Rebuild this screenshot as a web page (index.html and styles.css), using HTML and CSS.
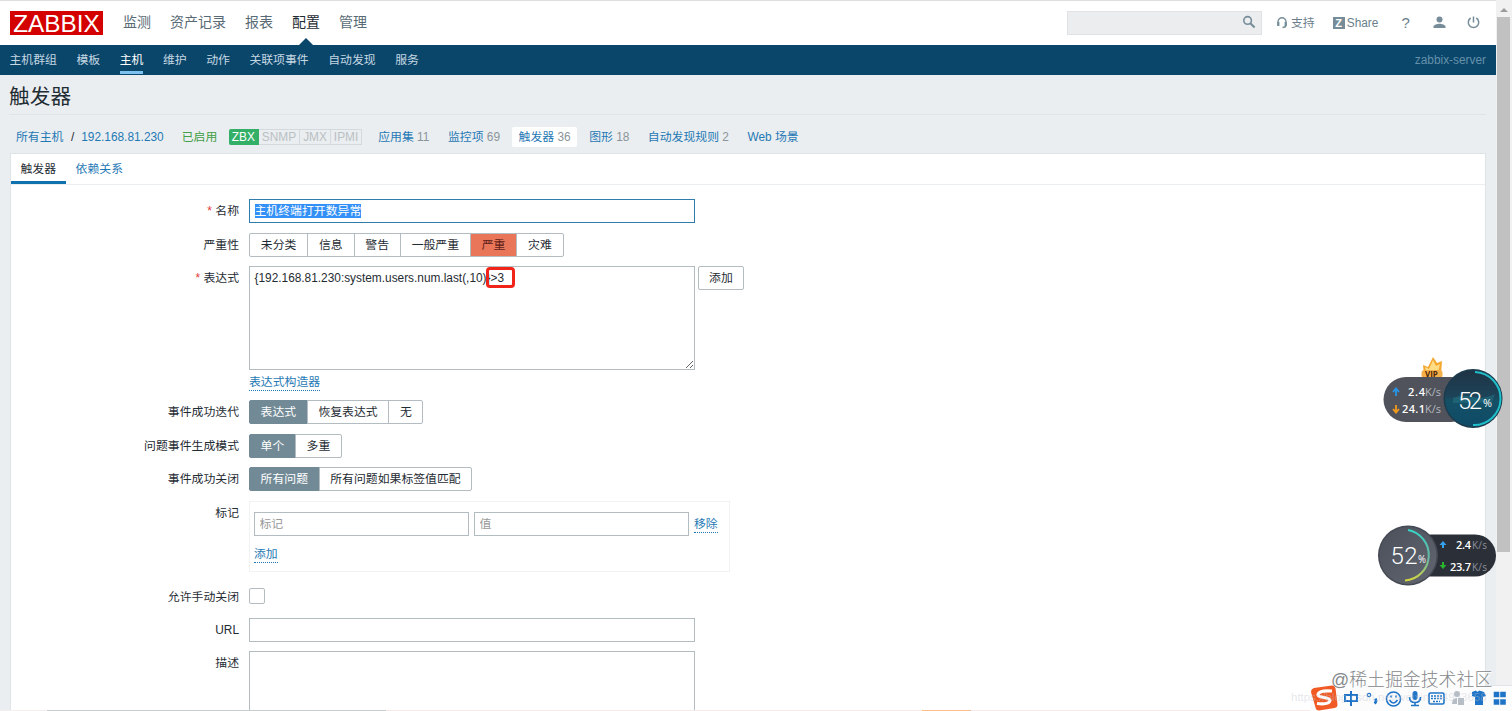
FILE: index.html
```html
<!DOCTYPE html>
<html lang="zh-CN">

<head>
    <meta charset="UTF-8">
    <title>触发器</title>
    <link rel="stylesheet" href="styles.css">
</head>

<body>
    <div class="page">
        <!-- 顶部菜单 -->
        <header class="top">
            <a class="logo">ZABBIX</a>
            <ul class="top-nav">
                <li>监测</li>
                <li>资产记录</li>
                <li>报表</li>
                <li class="selected">配置</li>
                <li>管理</li>
            </ul>
            <div class="search">
                <svg width="14" height="14" viewBox="0 0 14 14" fill="none" stroke="#768d99">
                    <circle cx="5.6" cy="5.4" r="3.8" stroke-width="1.6" />
                    <path d="M8.4 8.2l4.2 4.3" stroke-width="2" />
                </svg>
            </div>
            <div class="tools">
                <a class="support">
                    <svg width="12" height="13" viewBox="0 0 12 13" fill="none" stroke="#768d99">
                        <path d="M2 9.5V6a4 4.300 0 0 1 8 0v3.500Q9.500 11.500 6.500 11.500" stroke-width="1.400" />
                        <path d="M2.300 6v4M9.700 6v4" stroke-width="2.200" />
                    </svg>
                    支持
                </a>
                <a class="share"><span class="z">Z</span>Share</a>
                <a class="help">?</a>
                <svg class="user" width="13" height="13" viewBox="0 0 13 13" fill="#768d99">
                    <circle cx="6.5" cy="3.5" r="3" />
                    <path d="M.5 12v-1.400C.5 8.700 4.300 7.700 6.500 7.700s6 1 6 2.900V12z" />
                </svg>
                <svg class="power" width="13" height="13" viewBox="0 0 13 13" fill="none" stroke="#768d99" stroke-width="1.5">
                    <path d="M6.500 .5v6M3.700 2A5.200 5.200 0 1 0 9.300 2" />
                </svg>
            </div>
        </header>
        <!-- 二级菜单 -->
        <nav class="sub-nav">
            <a>主机群组</a>
            <a>模板</a>
            <a class="selected">主机</a>
            <a>维护</a>
            <a>动作</a>
            <a>关联项事件</a>
            <a>自动发现</a>
            <a>服务</a>
            <span class="server">zabbix-server</span>
        </nav>
        <h1>触发器</h1>
        <!-- 主机信息 -->
        <div class="crumbs">
            <a>所有主机</a>
            <span class="slash">/</span>
            <a>192.168.81.230</a>
            <span class="green">已启用</span>
            <div class="status">
                <span class="on">ZBX</span><span>SNMP</span><span>JMX</span><span>IPMI</span>
            </div>
            <div class="links">
                <span><a>应用集</a> 11</span>
                <span><a>监控项</a> 69</span>
                <span class="selected"><a>触发器</a> 36</span>
                <span><a>图形</a> 18</span>
                <span><a>自动发现规则</a> 2</span>
                <span><a>Web 场景</a></span>
            </div>
        </div>
        <!-- 表单 -->
        <main class="card">
            <div class="tabs">
                <a class="selected">触发器</a>
                <a>依赖关系</a>
            </div>
            <form class="form">
                <label class="required">名称</label>
                <div class="input focus"><span class="selection">主机终端打开数异常</span></div>

                <label>严重性</label>
                <div class="radio severity">
                    <span>未分类</span><span>信息</span><span>警告</span><span>一般严重</span><span class="high">严重</span><span>灾难</span>
                </div>

                <label class="required">表达式</label>
                <div class="expression">
                    <div class="expression-row">
                        <textarea class="textarea" spellcheck="false">{192.168.81.230:system.users.num.last(,10)}>3</textarea>
                        <span class="btn">添加</span>
                        <div class="mark"></div>
                    </div>
                    <a class="dotted">表达式构造器</a>
                </div>

                <label>事件成功迭代</label>
                <div class="radio">
                    <span class="checked">表达式</span><span>恢复表达式</span><span>无</span>
                </div>

                <label>问题事件生成模式</label>
                <div class="radio">
                    <span class="checked">单个</span><span>多重</span>
                </div>

                <label>事件成功关闭</label>
                <div class="radio">
                    <span class="checked">所有问题</span><span>所有问题如果标签值匹配</span>
                </div>

                <label>标记</label>
                <div class="tags">
                    <div class="tag-row">
                        <input class="input" type="text" placeholder="标记">
                        <input class="input" type="text" placeholder="值">
                        <a class="dotted">移除</a>
                    </div>
                    <a class="dotted">添加</a>
                </div>

                <label class="check-label">允许手动关闭</label>
                <div class="check-row"><span class="checkbox"></span></div>

                <label>URL</label>
                <div class="input"></div>

                <label>描述</label>
                <div class="textarea"></div>
            </form>
        </main>
    </div>

    <!-- 滚动条 -->
    <div class="scrollbar">
        <div class="arrow"></div>
        <div class="thumb"></div>
    </div>

    <!-- 网速悬浮球 -->
    <svg class="ball ball-top" width="124" height="78" viewBox="0 0 124 78">
        <defs>
            <linearGradient id="sea" x1="0" y1="0" x2="0" y2="1">
                <stop offset="0" stop-color="#1f3345" />
                <stop offset=".45" stop-color="#1d4358" />
                <stop offset=".55" stop-color="#145166" />
                <stop offset="1" stop-color="#0e4a66" />
            </linearGradient>
        </defs>
        <path d="M44 19l-1-9 5 2 5-10 4 6 5-2-1 13z" fill="#f3a72e" />
        <path d="M46 17l-1-5 4 2 4-9 3 6 4-2-2 8z" fill="#ffdc86" />
        <rect x="41.5" y="15" width="21" height="8" rx="3" fill="#f6b04a" />
        <text x="45" y="22" class="vip">VIP</text>
        <rect x="3.5" y="22" width="90" height="45" rx="22.5" fill="#50535c" />
        <path d="M16 41v-7M13 37l3-3.500 3 3.500" stroke="#2796e6" stroke-width="1.8" fill="none" />
        <path d="M16 50v7M13 54l3 3.500 3-3.500" stroke="#f39a1c" stroke-width="1.8" fill="none" />
        <text x="28" y="41" class="speed" textLength="17">2.4</text>
        <text x="45" y="41" class="unit" textLength="16">K/s</text>
        <text x="22" y="57.5" class="speed" textLength="23">24.1</text>
        <text x="45" y="57.5" class="unit" textLength="16">K/s</text>
        <circle cx="93" cy="43.5" r="29.5" fill="#1c3b4d" />
        <circle cx="93" cy="43.5" r="28" fill="url(#sea)" />
        <path d="M73 43q10-4 20-1t22-3l-3 8-39 1z" fill="#247080" opacity=".6" />
        <path d="M95 17a26.500 26.500 0 0 1-2 53" fill="none" stroke="#20bec8" stroke-width="2" />
        <text x="78" y="54" class="percent" textLength="24">52</text>
        <text x="103" y="52" class="sign" font-size="11" textLength="9" lengthAdjust="spacingAndGlyphs">%</text>
    </svg>
    <svg class="ball ball-bottom" width="124" height="66" viewBox="0 0 124 66">
        <defs>
            <linearGradient id="ring" x1="0" y1="0" x2="0" y2="1">
                <stop offset="0" stop-color="#35d3c6" />
                <stop offset=".6" stop-color="#6eb7a0" />
                <stop offset="1" stop-color="#d5d83d" />
            </linearGradient>
            <linearGradient id="dark" x1="0" y1="0" x2="1" y2="1">
                <stop offset="0" stop-color="#4b505b" />
                <stop offset="1" stop-color="#606570" />
            </linearGradient>
        </defs>
        <rect x="34" y="12.5" width="86" height="42" rx="21" fill="#2b2f38" />
        <circle cx="32" cy="33.5" r="30" fill="#454953" />
        <circle cx="32" cy="33.5" r="28.5" fill="url(#dark)" />
        <path d="M32 8a25.500 25.500 0 0 1-3 50.500" fill="none" stroke="url(#ring)" stroke-width="2" />
        <path d="M67 19l3.500 4H68v3h-2v-3h-2.500z" fill="#36a3ef" />
        <path d="M67 47l3.500-4H68v-3h-2v3h-2.500z" fill="#29b52e" />
        <text x="80" y="27" class="speed" textLength="15">2.4</text>
        <text x="96" y="27" class="unit dim" textLength="15">K/s</text>
        <text x="74" y="48.5" class="speed" textLength="21">23.7</text>
        <text x="96" y="48.5" class="unit dim" textLength="15">K/s</text>
        <text x="14.5" y="42" class="percent" textLength="27">52</text>
        <text x="42" y="41" class="sign" font-size="10" textLength="8" lengthAdjust="spacingAndGlyphs">%</text>
    </svg>

    <!-- 任务栏和输入法 -->
    <div class="taskbar"><i class="gray"></i><i class="pink"></i><i class="orange"></i><i class="pink rest"></i></div>
    <div class="ime">
        <svg width="202" height="27" viewBox="0 0 202 27" fill="none" stroke="#1f74c8" stroke-width="1.6">
            <path d="M4 3L22 .5q3 0 3.500 3l2 16q0 3-3 3.500L9 25.500q-3 0-3.500-3L1 7q0-3 3-4z" fill="#f15a24" stroke="none" />
            <path d="M22 6Q9 5 8 9.500c-.5 4 12 2 12 6Q19 20 7 18.500" stroke="#fff" stroke-width="3.2" />
            <path d="M35 10h12v6H35zM41 6v15" stroke-width="2" />
            <circle cx="59" cy="10" r="1.7" stroke-width="1.2" />
            <path d="M65.500 13.500q1.500 3-1 5" stroke-width="2.6" />
            <circle cx="83.5" cy="14" r="7" />
            <path d="M79.500 15q4 6 8 0M81 10.500v2M86 10.500v2" />
            <rect x="102.500" y="6" width="5" height="9" rx="2.5" fill="#1f74c8" stroke="none" />
            <path d="M99.500 12q0 5.500 5.500 5.500t5.500-5.500M105 17.500V21M101 20.500h8" />
            <rect x="119" y="8" width="15" height="11" rx="1.5" />
            <path d="M121 11h11M121 13.500h11M123 16.500h7" stroke-dasharray="2 1" />
            <g fill="#b6bdc5" stroke="none">
                <circle cx="147" cy="9" r="3" />
                <path d="M142 19q0-6 5-6v6zM148 13h6v7h-6z" />
            </g>
            <path d="M162 7l4-1.500q1.500 2.500 3 0L174 7l2 4-3 1v8h-8v-8l-3-1z" fill="#1f74c8" stroke="none" />
            <path d="M184.500 7.500h4v4h-4zM191 7.500h4v4h-4zM184.500 15h4v4h-4zM191 15h4v4h-4z" fill="#1f74c8" />
        </svg>
    </div>
    <div class="blog">https://blog.csdn.net/weixin_44953658</div>
    <div class="community">@稀土掘金技术社区</div>
</body>

</html>
```
FILE: styles.css
```css
* {
    box-sizing: border-box;
}

body {
    margin: 0;
    height: 711px;
    display: flex;
    overflow: hidden;
    background-color: #ebeef0;
    color: #1f2c33;
    font-family: "Liberation Sans", "Noto Sans CJK SC", sans-serif;
    font-size: 11.86px;
    line-height: 16px;
}

.page {
    width: 1496px;
    height: 711px;
    overflow: hidden;
    border-top: 1px solid #dedede;
}

a {
    color: #1f79b5;
}

/* 顶部 */
.top {
    display: flex;
    align-items: center;
    height: 44px;
    padding: 0 10px;
    background-color: #fff;
}

.logo {
    width: 93px;
    height: 24px;
    background-color: #d40000;
    color: #fff;
    font-size: 24.3px;
    line-height: 26px;
    text-align: center;
}

.top-nav {
    display: flex;
    gap: 19px;
    margin: 0 0 0 20px;
    padding: 0;
    list-style: none;
    font-size: 14px;
    line-height: 43px;
    color: #586a75;
}

.top-nav li {
    height: 44px;
}

.top-nav .selected {
    position: relative;
    color: #1f2c33;
}

.top-nav .selected::after {
    content: "";
    position: absolute;
    left: 7px;
    bottom: 0;
    border: 7px solid transparent;
    border-top: 0;
    border-bottom-color: #0a466a;
}

.search {
    display: flex;
    align-items: center;
    justify-content: flex-end;
    width: 195px;
    height: 24px;
    margin-left: auto;
    padding-right: 5px;
    background-color: #ebedee;
    border: 1px solid #e0e3e5;
}

.search svg {
    margin-bottom: 2px;
}

.tools {
    display: flex;
    align-items: center;
    width: 224px;
    padding: 0 0 1px 14px;
    color: #768d99;
}

.tools a {
    display: flex;
    align-items: center;
    color: #6a7f8b;
}

.support svg {
    margin-right: 3px;
}

.share {
    margin-left: 18px;
}

.share .z {
    width: 12px;
    height: 12px;
    margin-right: 2px;
    background-color: #768d99;
    color: #fff;
    font-size: 11px;
    font-weight: bold;
    line-height: 12px;
    text-align: center;
}

.tools .help {
    margin-left: 23px;
    font-size: 15px;
}

.user {
    margin-left: 23px;
}

.power {
    margin-left: 21px;
}

/* 二级菜单 */
.sub-nav {
    display: flex;
    gap: 19.5px;
    height: 30px;
    padding: 0 10px 0 9.5px;
    background-color: #0a466a;
    line-height: 30px;
}

.sub-nav a {
    height: 29px;
    color: #c5d8e3;
}

.sub-nav .selected {
    color: #fff;
    border-bottom: 3px solid #7dc1f1;
}

.server {
    margin-left: auto;
    color: #6591aa;
}

h1 {
    height: 40px;
    margin: 0 10px 0 9px;
    border-bottom: 1px solid #dfe4e7;
    font-size: 20.7px;
    font-weight: normal;
    line-height: 44px;
}

/* 主机信息 */
.crumbs {
    display: flex;
    align-items: center;
    height: 38px;
    padding: 5px 16px 0;
}

.slash {
    margin: 0 7px 0 7.5px;
}

.green {
    margin-left: 18px;
    color: #429e47;
}

.status {
    display: flex;
    margin: 0 9.5px 0 11.5px;
    line-height: 15px;
}

.status span {
    padding: 0 3px;
    border: 1px solid #d3d9dc;
    border-left: 0;
    color: #b9c0c4;
    line-height: 14px;
}

.status .on {
    background-color: #34af67;
    border-color: #34af67;
    border-radius: 2px 0 0 2px;
    color: #fff;
}

.links {
    display: flex;
    gap: 5.5px;
    color: #8a959b;
}

.links span {
    padding: 2px 6.5px;
    border-radius: 2px;
}

.links .selected {
    background-color: #fff;
}

/* 表单 */
.card {
    height: 620px;
    margin: 0 10px;
    background-color: #fff;
    border: 1px solid #dfe4e7;
}

.tabs {
    display: flex;
    height: 31px;
    border-bottom: 1px solid #ebeef0;
    line-height: 31px;
}

.tabs a {
    height: 30px;
    padding: 0 10px 0 9.5px;
}

.tabs .selected {
    color: #1f2c33;
    border-bottom: 3px solid #0f71ae;
}

.form {
    display: grid;
    grid-template-columns: 228px 1fr;
    column-gap: 10px;
    row-gap: 9.7px;
    padding-top: 14px;
}

.form label {
    line-height: 24px;
    text-align: right;
}

.required::before {
    content: "* ";
    color: #e33734;
}

.input,
.textarea {
    width: 445.5px;
    border: 1px solid #b3bcc1;
    background-color: #fff;
    color: #1f2c33;
    font: inherit;
}

.input {
    height: 24px;
    padding: 0 4.5px;
    line-height: 23px;
}

.focus {
    border-color: #2f7cad;
}

.selection {
    display: inline-block;
    height: 14px;
    background-color: #3390f7;
    color: #fff;
    line-height: 14px;
}

.textarea {
    display: block;
    height: 104px;
    margin: 0;
    padding: 3px 4.5px;
    outline: 0;
}

.radio {
    display: flex;
    height: 24px;
}

.radio span,
.btn {
    height: 24px;
    padding: 0 10.6px;
    border: 1px solid #b3bcc1;
    line-height: 22px;
}

.radio span + span {
    margin-left: -1px;
}

.severity span {
    padding: 0 10.8px;
}

.radio span:first-child {
    border-radius: 2px 0 0 2px;
}

.radio span:last-child {
    border-radius: 0 2px 2px 0;
}

.radio .checked {
    background-color: #728a96;
    border-color: #728a96;
    color: #fff;
}

.radio .high {
    background-color: #e97659;
    color: #5c2018;
}

.expression {
    height: 124px;
}

.expression-row {
    position: relative;
    display: flex;
    gap: 3px;
    height: 104px;
}

.btn {
    border-radius: 2px;
}

/* 阈值标注框 */
.mark {
    position: absolute;
    left: 237px;
    top: 1px;
    width: 29px;
    height: 21px;
    border: 3px solid #f02418;
    border-radius: 4px;
}

.dotted {
    display: inline-block;
    border-bottom: 1px dotted #1f79b5;
    line-height: 15px;
}

.expression > .dotted {
    margin-top: 5px;
}

.tags {
    width: 480.5px;
    height: 71px;
    padding: 10px 4px;
    border: 1px solid #f0f2f3;
}

.tag-row {
    display: flex;
    align-items: center;
    gap: 5px;
    margin-bottom: 10px;
}

.tag-row .input {
    width: 215px;
}

.tag-row .dotted {
    margin-top: 2px;
}

::placeholder {
    color: #999;
}

.form .check-label {
    line-height: 30px;
}

.check-row {
    height: 26px;
    padding-top: 6px;
}

.checkbox {
    display: block;
    width: 16px;
    height: 16px;
    border: 1px solid #b3bcc1;
    border-radius: 2px;
}

.check-label {
    height: 26px;
}

/* 滚动条 */
.scrollbar {
    width: 16px;
    height: 711px;
    padding-left: 1px;
    background-color: #f1f1f1;
}

.arrow {
    width: 0;
    margin: 8px 0 5px 3px;
    border: 4px solid transparent;
    border-top: 0;
    border-bottom-color: #9c9c9c;
}

.thumb {
    width: 13px;
    height: 535px;
    background-color: #c1c1c1;
}

/* 悬浮球 */
.ball {
    position: absolute;
    font-family: "Open Sans", sans-serif;
}

.ball-top {
    left: 1380px;
    top: 355px;
}

.ball-bottom {
    left: 1376px;
    top: 522px;
}

.speed {
    fill: #fff;
    font-size: 11px;
    font-weight: 600;
}

.unit {
    fill: #b4b7be;
    font-size: 11px;
}

.dim {
    fill: #8c919b;
    font-size: 10px;
}

.percent {
    fill: #fff;
    font-family: Roboto, sans-serif;
    font-size: 24px;
    font-weight: 300;
}

.sign {
    fill: #fff;
}

.vip {
    fill: #4a2507;
    font-size: 8px;
    font-weight: bold;
}

/* 底部 */
.taskbar {
    position: absolute;
    left: 0;
    top: 710px;
    display: flex;
    width: 1512px;
    height: 1px;
    padding-left: 47px;
    background-color: #f3efef;
}

.gray {
    width: 339px;
    background-color: #c9cccc;
}

.pink {
    width: 536px;
    background-color: #f5e9e9;
}

.orange {
    width: 49px;
    background-color: #f8bf8c;
}

.rest {
    flex: 1;
}

.ime {
    position: absolute;
    left: 1310px;
    top: 685px;
    width: 202px;
    height: 26px;
    background: linear-gradient(#e1e4e6, #e1e4e6) 175px 0 / 27px 1px no-repeat, #fcfcfd;
}

.blog {
    position: absolute;
    left: 1291px;
    top: 689px;
    color: rgba(190, 196, 204, .4);
    font-size: 11.5px;
    white-space: nowrap;
}

.community {
    position: absolute;
    left: 1331px;
    top: 667px;
    color: #85888b;
    font-size: 17.9px;
    font-weight: 300;
    line-height: 26px;
    white-space: nowrap;
    text-shadow: 1px 1px 0 #fff;
}
```
